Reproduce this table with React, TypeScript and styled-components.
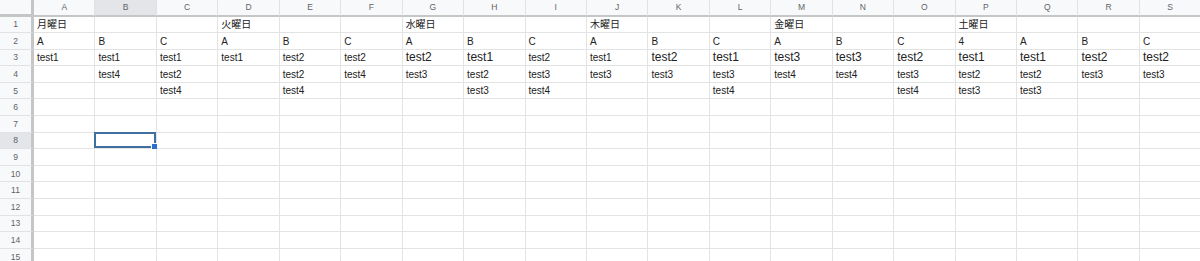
import { Fragment } from "react";
import styled, { createGlobalStyle } from "styled-components";

const GlobalStyle = createGlobalStyle`
  html, body {
    margin: 0;
    padding: 0;
    background: #fff;
    overflow: hidden;
  }
`;

const COLS = "ABCDEFGHIJKLMNOPQRS".split("");
const ROW_COUNT = 15;
const SELECTED = { col: 1, row: 8 };

// sheet data, keyed by row number; cells marked big use the larger size
type Cell = { text: string; big?: boolean };
const DATA: Record<number, (Cell | null)[]> = {
  1: [
    { text: "月曜日" }, null, null, { text: "火曜日" }, null, null,
    { text: "水曜日" }, null, null, { text: "木曜日" }, null, null,
    { text: "金曜日" }, null, null, { text: "土曜日" }, null, null, null,
  ],
  2: "A B C A B C A B C A B C A B C 4 A B C".split(" ").map((t) => ({ text: t })),
  3: [
    { text: "test1" }, { text: "test1" }, { text: "test1" }, { text: "test1" },
    { text: "test2" }, { text: "test2" }, { text: "test2", big: true },
    { text: "test1", big: true }, { text: "test2" }, { text: "test1" },
    { text: "test2", big: true }, { text: "test1", big: true },
    { text: "test3", big: true }, { text: "test3", big: true },
    { text: "test2", big: true }, { text: "test1", big: true },
    { text: "test1", big: true }, { text: "test2", big: true },
    { text: "test2", big: true },
  ],
  4: [
    null, { text: "test4" }, { text: "test2" }, null, { text: "test2" },
    { text: "test4" }, { text: "test3" }, { text: "test2" }, { text: "test3" },
    { text: "test3" }, { text: "test3" }, { text: "test3" }, { text: "test4" },
    { text: "test4" }, { text: "test3" }, { text: "test2" }, { text: "test2" },
    { text: "test3" }, { text: "test3" },
  ],
  5: [
    null, null, { text: "test4" }, null, { text: "test4" }, null, null,
    { text: "test3" }, { text: "test4" }, null, null, { text: "test4" }, null,
    null, { text: "test4" }, { text: "test3" }, { text: "test3" }, null, null,
  ],
};

const Grid = styled.div`
  display: grid;
  grid-template-columns: 34px repeat(19, 61.45px);
  grid-template-rows: 16.5px repeat(15, 16.6px);
  font-family: "Liberation Sans", "Noto Sans CJK JP", Arial, sans-serif;
`;

const Corner = styled.div`
  background: #f8f9fa;
  border-right: 3px solid #c4c7c5;
  border-bottom: 3px solid #c4c7c5;
  box-sizing: border-box;
`;

const ColHeader = styled.div<{ $active: boolean }>`
  display: flex;
  align-items: center;
  justify-content: center;
  background: ${(p) => (p.$active ? "#e3e5e8" : "#f8f9fa")};
  border-right: 1px solid #e0e2e3;
  border-bottom: 2px solid #c4c7c5;
  box-sizing: border-box;
  font-size: 8.5px;
  color: #5f6368;
`;

const RowHeader = styled.div<{ $active: boolean }>`
  display: flex;
  align-items: center;
  justify-content: center;
  background: ${(p) => (p.$active ? "#e3e5e8" : "#f8f9fa")};
  border-right: 3px solid #c4c7c5;
  border-bottom: 1px solid #e0e2e3;
  box-sizing: border-box;
  font-size: 8.5px;
  color: #5f6368;
`;

const DataCell = styled.div<{ $big: boolean }>`
  position: relative;
  display: flex;
  align-items: flex-end;
  padding: 0 0 2px 3px;
  border-right: 1px solid #e2e3e3;
  border-bottom: 1px solid #e2e3e3;
  box-sizing: border-box;
  font-size: ${(p) => (p.$big ? "12px" : "10px")};
  line-height: 1;
  color: #222;
  white-space: nowrap;
`;

const Selection = styled.div`
  position: absolute;
  inset: -1px 0 0 -1px;
  border: 2px solid #3e6f9e;
  pointer-events: none;
`;

const Handle = styled.div`
  position: absolute;
  right: -4px;
  bottom: -4px;
  width: 5px;
  height: 5px;
  background: #2b6fd0;
  border: 1px solid #fff;
`;

export default function App() {
  const rows = Array.from({ length: ROW_COUNT }, (_, i) => i + 1);
  return (
    <>
      <GlobalStyle />
      <Grid>
        <Corner />
        {COLS.map((c, i) => (
          <ColHeader key={c} $active={i === SELECTED.col}>
            {c}
          </ColHeader>
        ))}
        {rows.map((r) => (
          <Fragment key={r}>
            <RowHeader $active={r === SELECTED.row}>{r}</RowHeader>
            {COLS.map((c, ci) => {
              const cell = DATA[r]?.[ci] ?? null;
              const sel = r === SELECTED.row && ci === SELECTED.col;
              return (
                <DataCell key={`${c}${r}`} $big={!!cell?.big}>
                  {cell?.text}
                  {sel && (
                    <Selection>
                      <Handle />
                    </Selection>
                  )}
                </DataCell>
              );
            })}
          </Fragment>
        ))}
      </Grid>
    </>
  );
}
